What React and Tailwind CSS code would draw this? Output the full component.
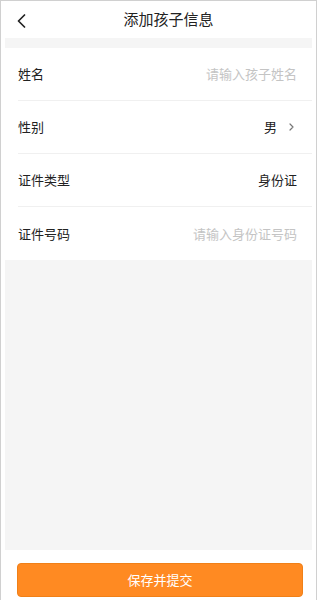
const rows = [
  { label: "姓名", value: "请输入孩子姓名", placeholder: true },
  { label: "性别", value: "男", arrow: true },
  { label: "证件类型", value: "身份证" },
  { label: "证件号码", value: "请输入身份证号码", placeholder: true },
];

export default function App() {
  return (
    <div
      className="w-[319px] h-[600px] bg-white flex"
      style={{ fontFamily: '"Noto Sans CJK SC", "Noto Sans", sans-serif' }}
    >
      <div className="w-[317px] h-full border-l border-r border-t border-[#d0d0d0] flex flex-col px-[4px]">
        {/* header */}
        <div className="h-[37px] flex items-center relative shrink-0">
          <svg
            className="absolute left-[12px] top-[13px]"
            width="9"
            height="14"
            viewBox="0 0 9 14"
            fill="none"
          >
            <path d="M7.5 1L1.5 7l6 6" stroke="#222" strokeWidth="1.7" strokeLinecap="round" strokeLinejoin="round" />
          </svg>
          <div className="flex-1 text-center pl-[20px] text-[15px] text-[#222]">
            添加孩子信息
          </div>
        </div>
        <div className="h-[10px] bg-[#f5f5f5] shrink-0" />

        {/* form */}
        <div className="bg-white shrink-0">
          {rows.map((r, i) => (
            <div key={r.label} className="pl-[13px]">
              <div
                className={
                  "h-[53px] flex items-center justify-between pr-[15px] " +
                  (i < rows.length - 1 ? "border-b border-[#f0f0f0]" : "")
                }
              >
                <span className="text-[13px] text-[#222]">{r.label}</span>
                <span className="flex items-center">
                  <span
                    className={
                      "text-[13px] " + (r.placeholder ? "text-[#c4c4c4]" : "text-[#222]")
                    }
                  >
                    {r.value}
                  </span>
                  {r.arrow && (
                    <svg className="ml-[12px] mr-[3px]" width="5" height="8" viewBox="0 0 5 8" fill="none">
                      <path d="M1 1l3 3-3 3" stroke="#777" strokeWidth="1.2" strokeLinecap="round" strokeLinejoin="round" />
                    </svg>
                  )}
                </span>
              </div>
            </div>
          ))}
        </div>

        <div className="flex-1 bg-[#f5f5f5]" />

        {/* footer */}
        <div className="h-[50px] shrink-0 bg-white pl-[12px] pr-[9px] pt-[13px]">
          <button className="w-full h-[34px] rounded-[4px] bg-[#ff8a22] border border-[#f08018] text-white text-[13px]">
            保存并提交
          </button>
        </div>
      </div>
    </div>
  );
}
